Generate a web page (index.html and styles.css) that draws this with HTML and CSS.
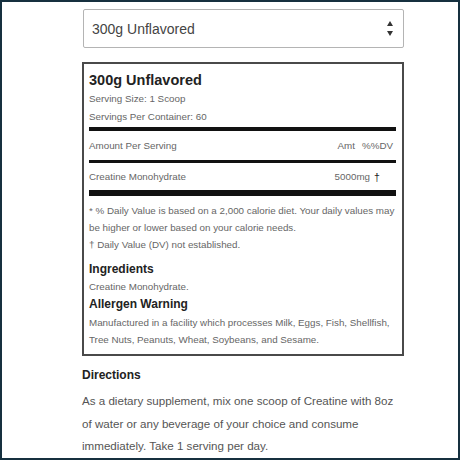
FILE: index.html
```html
<!DOCTYPE html>
<html>
<head>
<meta charset="utf-8">
<link rel="stylesheet" href="styles.css">
</head>
<body>
<div class="frame">
  <div class="col">
    <div class="select">
      <span class="select-text">300g Unflavored</span>
      <span class="arrows"><span class="up"></span><span class="down"></span></span>
    </div>

    <div class="label">
      <div class="title">300g Unflavored</div>
      <div class="line">Serving Size: 1 Scoop</div>
      <div class="line">Servings Per Container: 60</div>
      <div class="bar thick"></div>
      <div class="row head">
        <span class="name">Amount Per Serving</span>
        <span class="amt">Amt</span>
        <span class="dv">%%DV</span>
      </div>
      <div class="bar mid"></div>
      <div class="row item">
        <span class="name">Creatine Monohydrate</span>
        <span class="amt2">5000mg</span>
        <span class="dag">†</span>
      </div>
      <div class="bar heavy"></div>
      <div class="notes">
        <p>* % Daily Value is based on a 2,000 calorie diet. Your daily values may be higher or lower based on your calorie needs.</p>
        <p>† Daily Value (DV) not established.</p>
      </div>
      <div class="sub">Ingredients</div>
      <div class="line">Creatine Monohydrate.</div>
      <div class="sub">Allergen Warning</div>
      <p class="allergen">Manufactured in a facility which processes Milk, Eggs, Fish, Shellfish, Tree Nuts, Peanuts, Wheat, Soybeans, and Sesame.</p>
    </div>

    <div class="dir-title">Directions</div>
    <p class="dir">As a dietary supplement, mix one scoop of Creatine with 8oz of water or any beverage of your choice and consume immediately. Take 1 serving per day.</p>
  </div>
</div>
</body>
</html>
```

FILE: styles.css
```css
* { box-sizing: border-box; }
html, body { margin: 0; padding: 0; background: #fff; }
body { font-family: "Liberation Sans", Arial, sans-serif; }

.frame {
  width: 460px;
  height: 460px;
  border: 2px solid #16303f;
  overflow: hidden;
  padding: 7px 0 0 80px;
}
.col { width: 322px; }

.select {
  height: 39px;
  margin-left: 1px;
  border: 1px solid #b4b4b4;
  border-radius: 2px;
  display: flex;
  align-items: center;
  justify-content: space-between;
  padding: 0 10px 0 8px;
}
.select-text { font-size: 14px; color: #444; }
.arrows { display: flex; flex-direction: column; gap: 5px; margin-top: 0; }
.up, .down { width: 0; height: 0; border-left: 3px solid transparent; border-right: 3px solid transparent; }
.up { border-bottom: 5px solid #333; }
.down { border-top: 5px solid #333; }

.label {
  margin-top: 14px;
  border: 2px solid #4a4a4a;
  padding: 6px 6px 6px 5px;
  color: #666;
}
.title { font-size: 14.5px; font-weight: bold; color: #222; line-height: 20px; }
.line { font-size: 9.8px; line-height: 18px; }
.bar { background: #111; }
.bar.thick { height: 4px; margin-top: 1px; }
.bar.mid { height: 3px; margin-top: 0; }
.bar.heavy { height: 6px; }

.row { display: flex; align-items: center; font-size: 9.8px; }
.row.head { height: 29px; }
.row.item { height: 27px; }
.row .name { flex: 1; }
.amt { margin-right: 7px; }
.dv { margin-right: 3px; }
.amt2 { margin-right: 2px; }
.dag { width: 10px; text-align: center; margin-right: 14px; color: #222; font-size: 10.5px; }

.notes { padding-top: 6px; }
.notes p { margin: 0; font-size: 9.8px; line-height: 17px; }

.sub { font-size: 12px; font-weight: bold; color: #222; line-height: 16px; margin-top: 8px; }
.sub + .line { line-height: 18px; margin-top: 1px; }
.line + .sub { margin-top: 0; }
.allergen { margin: 2px 0 0; font-size: 9.8px; line-height: 17px; }

.dir-title { font-size: 12px; font-weight: bold; color: #222; line-height: 16px; margin-top: 11px; }
.dir { margin: 7px 0 0; font-size: 11.6px; line-height: 22.5px; color: #555; }
```
